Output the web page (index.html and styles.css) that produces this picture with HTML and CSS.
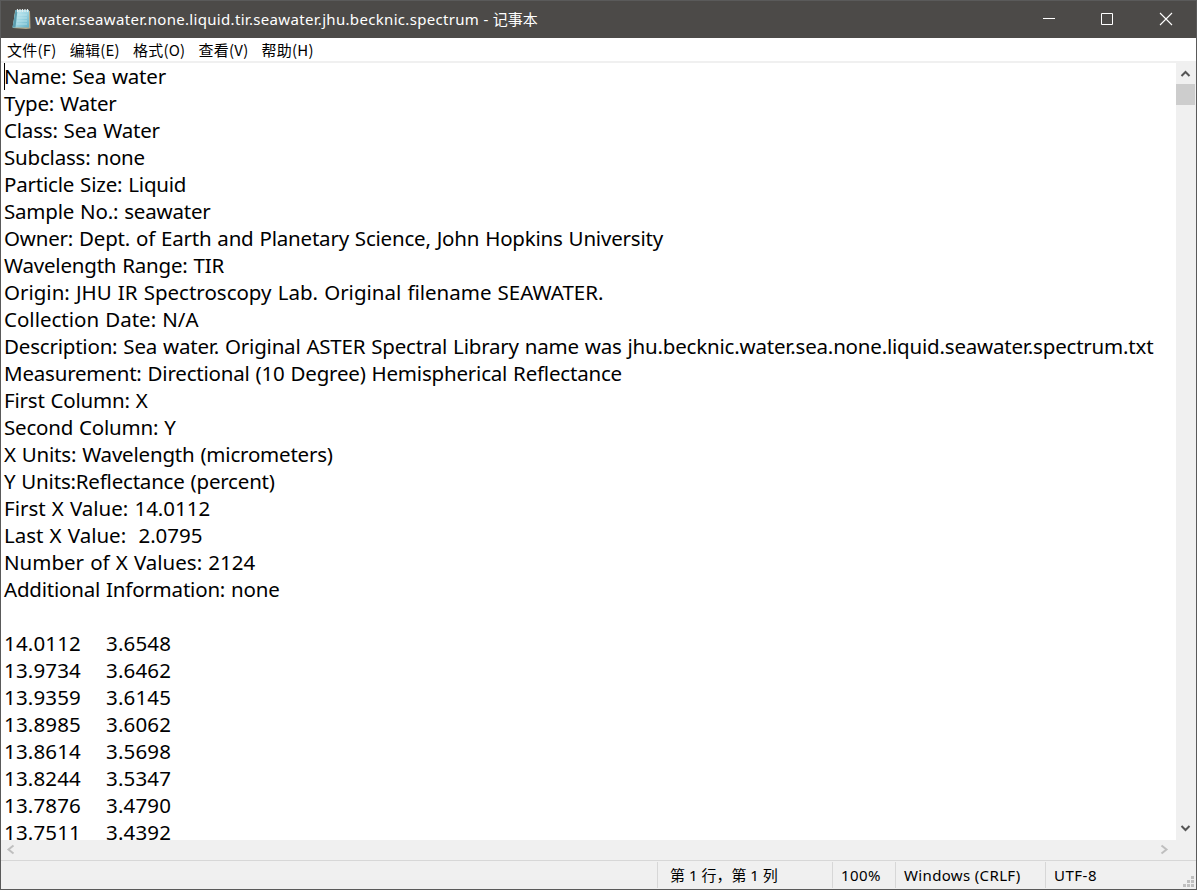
FILE: index.html
```html
<!DOCTYPE html>
<html lang="zh-CN">
<head>
	<meta charset="UTF-8">
	<meta name="viewport" content="width=device-width, initial-scale=1.0">
	<title>water.seawater.none.liquid.tir.seawater.jhu.becknic.spectrum - 记事本</title>
	<link rel="stylesheet" href="styles.css">
</head>
<body>
<div class="window">
	<!-- 标题栏 -->
	<header class="title-bar">
		<svg class="app-icon" width="20" height="22" viewBox="0 0 20 22">
			<defs>
				<linearGradient id="page" x1="0" y1="0" x2="1" y2="1">
					<stop offset="0" stop-color="#d3f1f6"/>
					<stop offset="0.5" stop-color="#9fd6e3"/>
					<stop offset="1" stop-color="#62b0c6"/>
				</linearGradient>
			</defs>
			<path d="M4 3 L19 3 L19.5 20.5 L15 21 L2 20 Z" fill="#b5aa8c"/>
			<path d="M4.500 2 H18 V19.500 H1.500 Z" fill="url(#page)"/>
			<path d="M4.500 2 L1.500 19.500 H4.500 L6.500 2 Z" fill="#5b9cad"/>
			<path d="M6.500 7 H16 M6 10 H16 M6 13 H16 M5.500 16 H16" stroke="#c5e8ee" stroke-width="0.700"/>
			<path d="M6.500 1 V4 M9 1 V4 M11.500 1 V4 M14 1 V4 M16.500 1 V4" stroke="#e4eef0" stroke-width="1.200"/>
		</svg>
		<h1 class="title">water.seawater.none.liquid.tir.seawater.jhu.becknic.spectrum - <span class="cjk">记事本</span></h1>
		<div class="controls">
			<svg width="58" height="37" viewBox="0 0 58 37"><path d="M22 17.500 H34" stroke="#fff"/></svg>
			<svg width="58" height="37" viewBox="0 0 58 37"><path d="M22.500 12.500 H33.500 V23.500 H22.500 Z" stroke="#fff" fill="none"/></svg>
			<svg width="59" height="37" viewBox="0 0 59 37"><path d="M23 12 L35 24 M35 12 L23 24" stroke="#fff" stroke-width="1.100"/></svg>
		</div>
	</header>

	<!-- 菜单 -->
	<nav class="menu">
		<span>文件(F)</span>
		<span>编辑(E)</span>
		<span>格式(O)</span>
		<span>查看(V)</span>
		<span>帮助(H)</span>
	</nav>

	<!-- 编辑区 -->
	<main class="editor">
		<div class="text">
			<span class="caret"></span>
			<p>Name: Sea water</p>
			<p>Type: Water</p>
			<p>Class: Sea Water</p>
			<p>Subclass: none</p>
			<p>Particle Size: Liquid</p>
			<p>Sample No.: seawater</p>
			<p>Owner: Dept. of Earth and Planetary Science, John Hopkins University</p>
			<p>Wavelength Range: TIR</p>
			<p class="loose">Origin: JHU IR Spectroscopy Lab. Original filename SEAWATER.</p>
			<p class="loose">Collection Date: N/A</p>
			<p>Description: Sea water. Original ASTER Spectral Library name was jhu.becknic.water.sea.none.liquid.seawater.spectrum.txt</p>
			<p>Measurement: Directional (10 Degree) Hemispherical Reflectance</p>
			<p>First Column: X</p>
			<p>Second Column: Y</p>
			<p>X Units: Wavelength (micrometers)</p>
			<p>Y Units:Reflectance (percent)</p>
			<p class="loose">First X Value: 14.0112</p>
			<p class="loose">Last X Value:  2.0795</p>
			<p class="loose">Number of X Values: 2124</p>
			<p>Additional Information: none</p>
			<p></p>
			<p class="data"><span>14.0112</span><span>3.6548</span></p>
			<p class="data"><span>13.9734</span><span>3.6462</span></p>
			<p class="data"><span>13.9359</span><span>3.6145</span></p>
			<p class="data"><span>13.8985</span><span>3.6062</span></p>
			<p class="data"><span>13.8614</span><span>3.5698</span></p>
			<p class="data"><span>13.8244</span><span>3.5347</span></p>
			<p class="data"><span>13.7876</span><span>3.4790</span></p>
			<p class="data"><span>13.7511</span><span>3.4392</span></p>
		</div>
		<div class="scroll-y">
			<svg width="20" height="21" viewBox="0 0 20 21"><path d="M5.500 13 L9.500 9 L13.500 13" stroke="#555" stroke-width="2" fill="none"/></svg>
			<div class="thumb"></div>
			<svg class="down" width="20" height="21" viewBox="0 0 20 21"><path d="M5.500 7 L9.500 11 L13.500 7" stroke="#555" stroke-width="2" fill="none"/></svg>
		</div>
	</main>
	<div class="scroll-x">
		<svg width="20" height="20" viewBox="0 0 20 20"><path d="M12.500 5.500 L7.500 9.500 L12.500 13.500" stroke="#bfbfbf" stroke-width="2" fill="none"/></svg>
		<svg width="20" height="20" viewBox="0 0 20 20"><path d="M5.500 5.500 L10.500 9.500 L5.500 13.500" stroke="#bfbfbf" stroke-width="2" fill="none"/></svg>
	</div>

	<!-- 状态栏 -->
	<footer class="status">
		<span class="cell position">第 1 行，第 1 列</span>
		<span class="cell zoom">100%</span>
		<span class="cell line-end">Windows (CRLF)</span>
		<span class="cell encoding">UTF-8</span>
		<svg class="grip" width="11" height="11" viewBox="0 0 11 11"><path d="M8 0h3v3h-3z M4 4h3v3h-3z M8 4h3v3h-3z M0 8h3v3h-3z M4 8h3v3h-3z M8 8h3v3h-3z" fill="#bfbfbf"/></svg>
	</footer>
</div>
</body>
</html>
```
FILE: styles.css
```css
* {
    margin: 0;
    padding: 0;
    box-sizing: border-box;
}

body {
    font-family: "Noto Sans", "Noto Sans CJK SC", sans-serif;
    color: #000;
    overflow: hidden;
}

svg {
    display: block;
    flex: none;
}

.window {
    display: flex;
    flex-direction: column;
    height: 100vh;
    border: 1px solid #5a5a5a;
    background: #fff;
}

.title-bar {
    display: flex;
    align-items: center;
    height: 37px;
    padding-left: 10px;
    background: #4c4a48;
    color: #fff;
}

.app-icon {
    margin-top: -2px;
}

.title {
    margin-left: 4px;
    font-size: 15px;
    font-weight: 400;
    letter-spacing: 0.32px;
    line-height: 34px;
    height: 36px;
    white-space: nowrap;
}

.cjk {
    font-family: "Noto Sans CJK SC", sans-serif;
    letter-spacing: 0;
}

.controls {
    display: flex;
    margin-left: auto;
}

.menu {
    display: flex;
    gap: 13px;
    height: 25px;
    padding-left: 6px;
    border-bottom: 2px solid #f0f0f0;
    font-size: 15px;
    letter-spacing: 0.25px;
    line-height: 24px;
    font-family: "Noto Sans CJK SC", sans-serif;
    white-space: nowrap;
}

.editor {
    display: flex;
    height: 777px;
}

.text {
    position: relative;
    flex: 1;
    padding-left: 3px;
    overflow: hidden;
    font-size: 20.5px;
    line-height: 27px;
    letter-spacing: -0.2px;
    word-spacing: 0.8px;
}

.text p {
    height: 27px;
    white-space: pre;
}

.text .loose {
    letter-spacing: 0;
}

.caret {
    position: absolute;
    left: 3px;
    top: 0;
    width: 1px;
    height: 27px;
    background: #000;
}

.data span {
    display: inline-block;
    width: 102px;
    letter-spacing: 0.15px;
}

.scroll-y {
    display: flex;
    flex-direction: column;
    width: 20px;
    background: #f0f0f0;
}

.thumb {
    width: 19px;
    height: 21px;
    background: #cdcdcd;
}

.down {
    margin-top: auto;
}

.scroll-x {
    display: flex;
    justify-content: space-between;
    height: 20px;
    padding-right: 20px;
    background: #f0f0f0;
}

.status {
    display: flex;
    flex: 1;
    justify-content: flex-end;
    position: relative;
    padding-top: 1px;
    border-top: 1px solid #d7d7d7;
    background: #f0f0f0;
    font-size: 15px;
    line-height: 27px;
    white-space: nowrap;
}

.cell {
    height: 26px;
    padding-left: 8px;
    border-left: 1px solid #d7d7d7;
}

.position {
    width: 175px;
    padding-left: 12px;
}

.zoom {
    width: 63px;
    letter-spacing: 0.4px;
}

.line-end {
    width: 150px;
    letter-spacing: 0.35px;
}

.encoding {
    width: 151px;
    letter-spacing: 0.5px;
}

.grip {
    position: absolute;
    right: 2px;
    bottom: 2px;
}
```
